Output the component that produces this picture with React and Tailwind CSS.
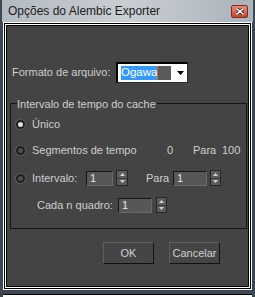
import React from "react";

const font = { fontFamily: '"Liberation Sans", Arial, sans-serif' };

function Radio({ checked = false }) {
  return (
    <span
      className={`flex h-[9px] w-[9px] shrink-0 items-center justify-center rounded-full border-2 border-[#1e1e1e] ${
        checked ? "bg-[#e2e2e2]" : "bg-[#505050]"
      } shadow-[0_0_0_1px_#5a5a5a]`}
    />
  );
}

function Campo({ valor, largura }) {
  return (
    <div
      className={`flex h-[15px] items-center border-t border-l border-t-[#161616] border-l-[#161616] border-b border-r border-b-[#6a6a6a] border-r-[#6a6a6a] bg-[#575757] pl-[3px] text-[11px] text-[#e4e8f0] ${largura}`}
    >
      {valor}
    </div>
  );
}

function Spinner({ classe = "" }) {
  return (
    <div
      className={`flex h-[16px] w-[11px] flex-col border border-[#262626] bg-[#5c5c5c] ${classe}`}
    >
      <div className="flex flex-1 items-center justify-center border-b border-[#3a3a3a]">
        <svg width="5" height="3" viewBox="0 0 5 3">
          <path d="M2.5 0 L5 3 L0 3 Z" fill="#d4d4d4" />
        </svg>
      </div>
      <div className="flex flex-1 items-center justify-center">
        <svg width="5" height="3" viewBox="0 0 5 3">
          <path d="M0 0 L5 0 L2.5 3 Z" fill="#d4d4d4" />
        </svg>
      </div>
    </div>
  );
}

function Botao({ children }) {
  return (
    <button className="flex h-[22px] w-[51px] items-center justify-center border-t border-l border-t-[#5e5e5e] border-l-[#5e5e5e] border-b border-r border-b-[#111] border-r-[#111] bg-[#454545] text-[11px] text-[#d0d0d0]">
      {children}
    </button>
  );
}

export default function App() {
  return (
    <div
      className="flex h-[297px] w-[255px] flex-col overflow-hidden bg-[#3c4753]"
      style={font}
    >
      {/* barra de título */}
      <div className="mx-[2px] flex h-[22px] shrink-0 items-center justify-between bg-gradient-to-r from-[#b3bac1] via-[#c9ced3] to-[#aab2ba] pl-[6px] pr-[5px]">
        <span className="text-[12px] text-[#1c1c1c]">
          Opções do Alembic Exporter
        </span>
        <div className="flex h-[13px] w-[17px] items-center justify-center rounded-[2px] border border-[#7d2b1e] bg-gradient-to-b from-[#e88a78] to-[#c8432d]">
          <svg width="8" height="7" viewBox="0 0 8 7">
            <path
              d="M1 1 L7 6 M7 1 L1 6"
              stroke="#3a1510"
              strokeWidth="3"
              strokeLinecap="square"
            />
            <path
              d="M1 1 L7 6 M7 1 L1 6"
              stroke="#ffffff"
              strokeWidth="1.6"
              strokeLinecap="square"
            />
          </svg>
        </div>
      </div>

      {/* moldura */}
      <div className="ml-[3px] h-[268px] w-[249px] shrink-0 border border-white">
        <div className="h-full w-full border border-black">
          <div className="h-full w-full border border-white">
            <div className="h-full w-full border border-black bg-[#444444]">
              {/* formato */}
              <div className="mt-[36px] flex h-[20px] items-center pl-[5px]">
                <span className="w-[104px] text-[11px] text-[#cfcfcf]">
                  Formato de arquivo:
                </span>
                <div className="flex h-[21px] w-[72px] items-center border-t-2 border-l-2 border-t-black border-l-black border-b border-r border-b-[#2c2c2c] border-r-[#2c2c2c] bg-white pl-[3px]">
                  <span className="flex h-[14px] items-center bg-[#3399ff] text-[11.5px] text-white">
                    Ogawa
                  </span>
                  <span className="h-[14px] w-[1px] bg-[#e06a1a]" />
                  <span className="h-[14px] w-[13px] bg-[#5a5a5a]" />
                  <span className="flex flex-1 items-center justify-center pl-[2px]">
                    <svg width="7" height="4" viewBox="0 0 7 4">
                      <path d="M0 0 L7 0 L3.5 4 Z" fill="#000" />
                    </svg>
                  </span>
                </div>
              </div>

              {/* intervalo de tempo */}
              <div className="relative ml-[3px] mt-[21px] h-[126px] w-[237px] border border-[#141414]">
                <span className="absolute left-[6px] top-[-8px] bg-[#444444] pr-[1px] text-[11px] text-[#cfcfcf]">
                  Intervalo de tempo do cache
                </span>

                <div className="pt-[12px] text-[11px] text-[#cfcfcf]">
                  <div className="flex h-[16px] items-center pl-[5px]">
                    <Radio checked />
                    <span className="ml-[7px]">Único</span>
                  </div>

                  <div className="mt-[10px] flex h-[16px] items-center pl-[5px]">
                    <Radio />
                    <span className="ml-[7px] w-[135px]">
                      Segmentos de tempo
                    </span>
                    <span className="w-[26px]">0</span>
                    <span className="w-[29px]">Para</span>
                    <span>100</span>
                  </div>

                  <div className="mt-[12px] flex h-[16px] items-center pl-[5px]">
                    <Radio />
                    <span className="ml-[7px] w-[54px]">Intervalo:</span>
                    <Campo valor="1" largura="w-[27px]" />
                    <Spinner classe="ml-[3px] w-[12px]" />
                    <span className="ml-[18px] w-[27px]">Para</span>
                    <Campo valor="1" largura="w-[34px]" />
                    <Spinner classe="ml-[3px]" />
                  </div>

                  <div className="mt-[11px] flex h-[16px] items-center pl-[26px]">
                    <span className="w-[81px]">Cada n quadro:</span>
                    <Campo valor="1" largura="w-[34px]" />
                    <Spinner classe="ml-[4px]" />
                  </div>
                </div>
              </div>

              {/* botões */}
              <div className="mt-[13px] flex gap-[15px] pl-[96px]">
                <Botao>OK</Botao>
                <Botao>Cancelar</Botao>
              </div>
            </div>
          </div>
        </div>
      </div>

      <div className="mt-[4px] ml-[3px] h-[1px] w-[249px] bg-black" />
      <div className="ml-[3px] h-[2px] w-[249px] bg-white" />
    </div>
  );
}
